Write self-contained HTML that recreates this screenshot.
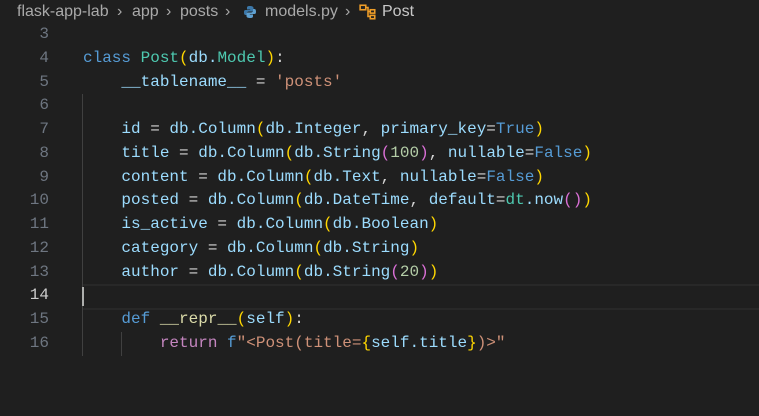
<!DOCTYPE html>
<html><head><meta charset="utf-8"><style>
html,body{margin:0;padding:0;background:#1f1f1f;width:759px;height:416px;overflow:hidden}
.bc{position:absolute;left:0;top:0;height:24px;width:759px;font:16px "Liberation Sans",sans-serif;color:#a9a9a9;white-space:nowrap}
.bc span{position:absolute;top:3px}
.code{position:absolute;left:0;top:23px;width:759px;font:16px "Liberation Mono",monospace}
.ln{position:absolute;left:0;width:49px;text-align:right;color:#6e7681;height:23.75px;line-height:23.75px}
.tx{position:absolute;left:83px;white-space:pre;height:23.75px;line-height:23.75px;color:#9cdcfe}
.k{color:#569cd6}.c{color:#4ec9b0}.f{color:#dcdcaa}.s{color:#ce9178}.n{color:#b5cea8}.r{color:#c586c0}.o{color:#d4d4d4}
.y{color:#ffd700}.p{color:#da70d6}.b{color:#179fff}
.g{position:absolute;width:1px;background:#404040}
</style></head><body>
<div class="bc">
<span style="left:17px">flask-app-lab</span>
<span style="left:117px">›</span>
<span style="left:132px">app</span>
<span style="left:166px">›</span>
<span style="left:180px">posts</span>
<span style="left:225px">›</span>
<svg style="position:absolute;left:243px;top:5px" width="14" height="14" viewBox="0 0 14 14"><path d="M7 1c-3 0-3 1-3 2v1.5h3.2V5H2.5C1 5 1 6.5 1 7.5S1.3 10 2.5 10H4V8.2C4 7 5 6.5 6 6.5h3c1 0 1.5-.5 1.5-1.5V3C10.5 1.5 9 1 7 1z" fill="#3b77a8"/><path d="M7 13c3 0 3-1 3-2V9.5H6.8V9h4.7c1.5 0 1.5-1.5 1.5-2.5S12.7 4 11.5 4H10v1.8C10 7 9 7.5 8 7.5H5c-1 0-1.5.5-1.5 1.5v2c0 1.5 1.5 2 3.5 2z" fill="#5fa0d0"/></svg>
<span style="left:265px">models.py</span>
<span style="left:345px">›</span>
<svg style="position:absolute;left:359px;top:4px" width="18" height="16" viewBox="0 0 16 14" fill="none" stroke="#ee9d28" stroke-width="1.4"><rect x="1" y="1" width="5" height="4"/><rect x="10" y="5" width="4" height="3"/><rect x="10" y="10" width="4" height="3"/><path d="M6 3h2v8h2M8 6.5h2"/></svg>
<span style="left:382px;color:#c8c8c8">Post</span>
</div>
<div class="code">
<div style="position:absolute;left:83px;top:261px;width:676px;height:22px;border-top:2px solid #282828;border-bottom:2px solid #282828"></div>
<div class="g" style="left:82px;top:71px;height:238px"></div>
<div class="g" style="left:82px;top:309px;height:24px"></div>
<div class="g" style="left:121px;top:309px;height:24px"></div>
<div style="position:absolute;left:82px;top:264px;width:2px;height:19px;background:#aeafad"></div>

<div class="ln" style="top:0">3</div>
<div class="ln" style="top:23.75px">4</div><div class="tx" style="top:23.75px"><span class="k">class</span> <span class="c">Post</span><span class="y">(</span>db.<span class="c">Model</span><span class="y">)</span><span class="o">:</span></div>
<div class="ln" style="top:47.5px">5</div><div class="tx" style="top:47.5px">    __tablename__ <span class="o">=</span> <span class="s">'posts'</span></div>
<div class="ln" style="top:71.25px">6</div>
<div class="ln" style="top:95px">7</div><div class="tx" style="top:95px">    id <span class="o">=</span> db.Column<span class="y">(</span>db.Integer<span class="o">,</span> primary_key<span class="o">=</span><span class="k">True</span><span class="y">)</span></div>
<div class="ln" style="top:118.75px">8</div><div class="tx" style="top:118.75px">    title <span class="o">=</span> db.Column<span class="y">(</span>db.String<span class="p">(</span><span class="n">100</span><span class="p">)</span><span class="o">,</span> nullable<span class="o">=</span><span class="k">False</span><span class="y">)</span></div>
<div class="ln" style="top:142.5px">9</div><div class="tx" style="top:142.5px">    content <span class="o">=</span> db.Column<span class="y">(</span>db.Text<span class="o">,</span> nullable<span class="o">=</span><span class="k">False</span><span class="y">)</span></div>
<div class="ln" style="top:166.25px">10</div><div class="tx" style="top:166.25px">    posted <span class="o">=</span> db.Column<span class="y">(</span>db.DateTime<span class="o">,</span> default<span class="o">=</span><span class="c">dt</span>.now<span class="p">()</span><span class="y">)</span></div>
<div class="ln" style="top:190px">11</div><div class="tx" style="top:190px">    is_active <span class="o">=</span> db.Column<span class="y">(</span>db.Boolean<span class="y">)</span></div>
<div class="ln" style="top:213.75px">12</div><div class="tx" style="top:213.75px">    category <span class="o">=</span> db.Column<span class="y">(</span>db.String<span class="y">)</span></div>
<div class="ln" style="top:237.5px">13</div><div class="tx" style="top:237.5px">    author <span class="o">=</span> db.Column<span class="y">(</span>db.String<span class="p">(</span><span class="n">20</span><span class="p">)</span><span class="y">)</span></div>
<div class="ln" style="top:261.25px;color:#cccccc">14</div>
<div class="ln" style="top:285px">15</div><div class="tx" style="top:285px">    <span class="k">def</span> <span class="f">__repr__</span><span class="y">(</span>self<span class="y">)</span><span class="o">:</span></div>
<div class="ln" style="top:308.75px">16</div><div class="tx" style="top:308.75px">        <span class="r">return</span> <span class="k">f</span><span class="s">"&lt;Post(title=</span><span class="y">{</span>self.title<span class="y">}</span><span class="s">)&gt;"</span></div>
</div>
</body></html>
